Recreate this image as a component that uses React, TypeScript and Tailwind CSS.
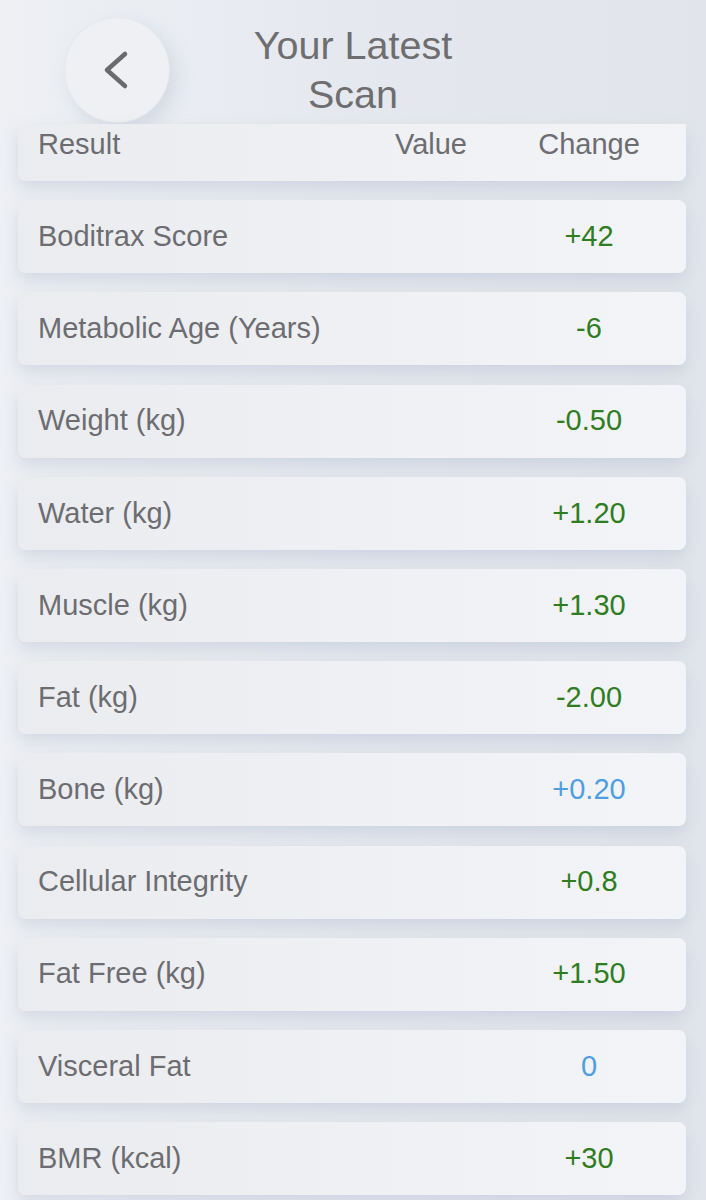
const ROWS: { label: string; change: string; tone: "good" | "neutral" }[] = [
  { label: "Boditrax Score", change: "+42", tone: "good" },
  { label: "Metabolic Age (Years)", change: "-6", tone: "good" },
  { label: "Weight (kg)", change: "-0.50", tone: "good" },
  { label: "Water (kg)", change: "+1.20", tone: "good" },
  { label: "Muscle (kg)", change: "+1.30", tone: "good" },
  { label: "Fat (kg)", change: "-2.00", tone: "good" },
  { label: "Bone (kg)", change: "+0.20", tone: "neutral" },
  { label: "Cellular Integrity", change: "+0.8", tone: "good" },
  { label: "Fat Free (kg)", change: "+1.50", tone: "good" },
  { label: "Visceral Fat", change: "0", tone: "neutral" },
  { label: "BMR (kcal)", change: "+30", tone: "good" },
];

const rowBase =
  "flex items-center gap-[11px] bg-gradient-to-r from-[#ebecf0] to-[#f3f4f7] text-[29px] shadow-[0_8px_16px_rgba(165,178,200,0.35)]";

export default function App() {
  return (
    <div
      className="min-h-[1200px] overflow-hidden bg-gradient-to-r from-[#eef0f4] via-[#e5e9ef] to-[#e1e5eb] text-[#6d6d71]"
      style={{ fontFamily: '"Liberation Sans", Arial, sans-serif' }}
    >
      {/* header */}
      <header className="grid h-[124px] grid-cols-[1fr_auto_1fr] items-center">
        <div className="flex pl-[64px] pt-[16px]">
          <button className="flex h-[106px] w-[106px] items-center justify-center rounded-full border border-[#e6e8ec] bg-[#eef0f3] shadow-[6px_8px_18px_rgba(170,182,204,0.35)]">
            <svg width="32" height="42" viewBox="0 0 32 42" fill="none">
              <path
                d="M24 5 L6 21 L24 37"
                stroke="#6a6a6c"
                strokeWidth="4.5"
                strokeLinecap="round"
                strokeLinejoin="round"
              />
            </svg>
          </button>
        </div>
        <h1 className="pt-[16px] text-center text-[39.5px] leading-[49px] text-[#6e6e70]">
          Your Latest
          <br />
          Scan
        </h1>
        <div />
      </header>

      <div className="flex flex-col gap-[19.2px] pl-[18px] pr-[20px]">
        {/* column headings */}
        <div className={`${rowBase} h-[57px] rounded-b-[8px] pb-[16px]`}>
          <span className="flex-1 pl-[20px]">Result</span>
          <span className="w-[100px] text-center">Value</span>
          <span className="w-[194px] text-center">Change</span>
        </div>

        {ROWS.map((r) => (
          <div key={r.label} className={`${rowBase} h-[73px] rounded-[8px]`}>
            <span className="flex-1 pl-[20px]">{r.label}</span>
            <span className="w-[100px]" />
            <span
              className={`w-[194px] text-center ${
                r.tone === "good" ? "text-[#2f7d1f]" : "text-[#4f9ee2]"
              }`}
            >
              {r.change}
            </span>
          </div>
        ))}
      </div>
    </div>
  );
}
